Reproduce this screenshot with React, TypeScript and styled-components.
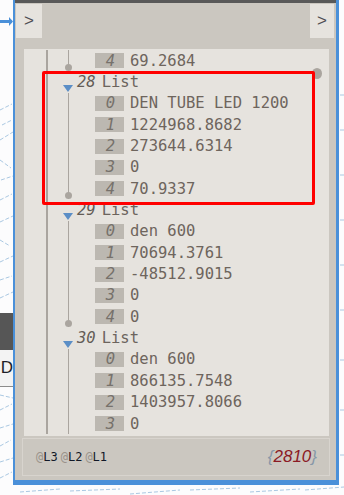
import React from "react";
import styled, { createGlobalStyle } from "styled-components";

const Global = createGlobalStyle`
  html, body { margin: 0; padding: 0; }
  body { width: 344px; height: 495px; overflow: hidden; background: #fcfcfd; }
`;

const MONO = `"DejaVu Sans Mono", "Liberation Mono", monospace`;

const Canvas = styled.div`
  position: relative;
  width: 344px;
  height: 495px;
  overflow: hidden;
  background: #fcfcfd;
`;

const Sketch = styled.svg`
  position: absolute;
  left: 0;
  top: 0;
  width: 344px;
  height: 495px;
`;

const SideNode = styled.div`
  position: absolute;
  left: 0;
  top: 313px;
  width: 13px;
  display: flex;
  flex-direction: column;
`;

const SideHead = styled.div`
  height: 37px;
  background: #565656;
`;

const SideBody = styled.div`
  height: 36px;
  background: #f3f3f3;
  border-bottom: 1px solid #8c8c8c;
  display: flex;
  align-items: center;
  justify-content: flex-end;
  font-family: "Liberation Sans", Arial, sans-serif;
  font-size: 17px;
  color: #1e1e28;
  overflow: hidden;
`;

const Node = styled.div`
  position: absolute;
  left: 13px;
  top: 0;
  width: 321px;
  border-left: 2px solid #4a90d9;
  border-right: 3px solid #4a90d9;
  border-bottom: 5px solid #4a90d9;
  background: #cbc7c0;
  display: flex;
  flex-direction: column;
`;

const TitleStrip = styled.div`
  height: 3px;
  background: #595959;
`;

const Header = styled.div`
  height: 46px;
  display: flex;
  justify-content: space-between;
  align-items: flex-start;
`;

const ExpandButton = styled.div<{ $side: "left" | "right" }>`
  margin-top: 1px;
  margin-left: ${(p) => (p.$side === "left" ? "1px" : "0")};
  margin-right: ${(p) => (p.$side === "right" ? "2px" : "0")};
  width: ${(p) => (p.$side === "left" ? "26px" : "24px")};
  height: 34px;
  background: #e6e3de;
  display: flex;
  align-items: center;
  justify-content: center;
  font-family: "Liberation Sans", Arial, sans-serif;
  font-size: 17px;
  color: #4e4e52;
  padding-bottom: 1px;
  box-sizing: border-box;
`;

const Panel = styled.div`
  position: relative;
  margin: 0 7px 0 9px;
  height: 387px;
  background: #e6e3de;
  padding: 1px 0 2px;
  box-sizing: border-box;
  display: flex;
  flex-direction: column;
`;

const Viewport = styled.div`
  flex: 1;
  overflow: hidden;
`;

const Trunk = styled.div`
  margin-left: 22px;
  border-left: 2px solid #aaa59f;
  min-height: 100%;
`;

const Group = styled.div``;

const HeaderRow = styled.div`
  height: 21.35px;
  display: flex;
  align-items: center;
  padding-left: 15px;
  font-family: ${MONO};
  font-size: 15.5px;
  white-space: nowrap;
`;

const Caret = styled.span`
  align-self: flex-end;
  margin-bottom: 1px;
  width: 0;
  height: 0;
  border-left: 5px solid transparent;
  border-right: 5px solid transparent;
  border-top: 7px solid #5b8ec6;
  margin-right: 4px;
`;

const ListIndex = styled.span`
  font-style: italic;
  color: #635c56;
  margin-right: 6px;
`;

const ListLabel = styled.span`
  color: #6c645d;
`;

const Children = styled.div<{ $open?: boolean }>`
  position: relative;
  margin-left: 20px;
  border-left: 1px solid #aaa59f;
  &::after {
    content: "";
    display: ${(p) => (p.$open ? "none" : "block")};
    position: absolute;
    left: -4px;
    bottom: 0;
    width: 7px;
    height: 7px;
    border-radius: 50%;
    background: #aaa59f;
  }
`;

const ItemRow = styled.div`
  height: 21.35px;
  display: flex;
  align-items: center;
  padding-left: 26px;
  font-family: ${MONO};
  font-size: 15.5px;
  white-space: nowrap;
`;

const IndexBox = styled.span`
  width: 29px;
  height: 15px;
  background: #bcb8b1;
  color: #76716b;
  font-style: italic;
  display: flex;
  align-items: center;
  justify-content: flex-end;
  padding-right: 9px;
  box-sizing: border-box;
  margin-right: 6px;
`;

const Value = styled.span`
  color: #6e655d;
`;

const ScrollDot = styled.div`
  position: absolute;
  right: 7px;
  top: 19px;
  width: 10px;
  height: 11px;
  border-radius: 50%;
  background: #aaa59f;
`;

const Footer = styled.div`
  margin: 2px 6px 4px 7px;
  height: 38px;
  border: 1px solid #d8d4ce;
  box-sizing: border-box;
  display: flex;
  align-items: center;
  justify-content: space-between;
  padding: 0 12px 0 13px;
`;

const Levels = styled.div`
  display: flex;
  gap: 3px;
  font-family: ${MONO};
  font-size: 12px;
`;

const Level = styled.span`
  color: #111827;
  & > b {
    font-weight: normal;
    color: #9a938b;
  }
`;

const Count = styled.div`
  font-family: "Liberation Sans", Arial, sans-serif;
  font-style: italic;
  font-size: 17px;
  color: #8b1a24;
  & > span {
    color: #8797a8;
  }
`;

const Highlight = styled.div`
  position: absolute;
  left: 42px;
  top: 71px;
  width: 273px;
  height: 134px;
  border: 3px solid #ff0000;
  border-radius: 2px;
  box-sizing: border-box;
`;

type ListData = { index?: number; open?: boolean; items: { i: number; v: string }[] };

const lists: ListData[] = [
  { items: [{ i: 4, v: "69.2684" }] },
  {
    index: 28,
    items: [
      { i: 0, v: "DEN TUBE LED 1200" },
      { i: 1, v: "1224968.8682" },
      { i: 2, v: "273644.6314" },
      { i: 3, v: "0" },
      { i: 4, v: "70.9337" },
    ],
  },
  {
    index: 29,
    items: [
      { i: 0, v: "den 600" },
      { i: 1, v: "70694.3761" },
      { i: 2, v: "-48512.9015" },
      { i: 3, v: "0" },
      { i: 4, v: "0" },
    ],
  },
  {
    index: 30,
    open: true,
    items: [
      { i: 0, v: "den 600" },
      { i: 1, v: "866135.7548" },
      { i: 2, v: "1403957.8066" },
      { i: 3, v: "0" },
    ],
  },
];

const sketchLines: [number, number, number, number][] = [
  [0, 110, 12, 104], [2, 125, 12, 120], [0, 140, 13, 132], [0, 160, 11, 168],
  [1, 180, 13, 176], [0, 200, 12, 194], [0, 222, 13, 216], [0, 240, 10, 246],
  [0, 262, 13, 256], [0, 280, 12, 276], [0, 298, 13, 292], [0, 395, 13, 398],
  [0, 410, 12, 404], [0, 428, 13, 424], [0, 446, 11, 440], [0, 462, 13, 458],
  [0, 478, 12, 472], [340, 95, 344, 95], [340, 130, 344, 130], [340, 175, 344, 175],
  [340, 220, 344, 220], [340, 265, 344, 265], [340, 310, 344, 310], [340, 360, 344, 360],
  [340, 410, 344, 410], [340, 455, 344, 455], [20, 492, 60, 489], [70, 491, 120, 489],
  [130, 494, 180, 490], [190, 490, 240, 488], [250, 492, 300, 489], [305, 490, 344, 487],
];

export default function App() {
  return (
    <>
      <Global />
      <Canvas>
        <Sketch viewBox="0 0 344 495">
          {sketchLines.map(([x1, y1, x2, y2], k) => (
            <line
              key={k}
              x1={x1}
              y1={y1}
              x2={x2}
              y2={y2}
              stroke="#aac8e2"
              strokeWidth={1}
              strokeDasharray="4 2"
            />
          ))}
          <line x1={0} y1={21.5} x2={12} y2={21.5} stroke="#4a90d9" strokeWidth={3} />
          <path d="M9 17 L13 21.5 L9 26 Z" fill="#4a90d9" />
        </Sketch>
        <SideNode>
          <SideHead />
          <SideBody>D</SideBody>
        </SideNode>
        <Node>
          <TitleStrip />
          <Header>
            <ExpandButton $side="left">&gt;</ExpandButton>
            <ExpandButton $side="right">&gt;</ExpandButton>
          </Header>
          <Panel>
            <Viewport>
              <Trunk>
                {lists.map((l, gi) => (
                  <Group key={gi}>
                    {l.index !== undefined && (
                      <HeaderRow>
                        <Caret />
                        <ListIndex>{l.index}</ListIndex>
                        <ListLabel>List</ListLabel>
                      </HeaderRow>
                    )}
                    <Children $open={l.open}>
                      {l.items.map((it) => (
                        <ItemRow key={it.i}>
                          <IndexBox>{it.i}</IndexBox>
                          <Value>{it.v}</Value>
                        </ItemRow>
                      ))}
                    </Children>
                  </Group>
                ))}
              </Trunk>
            </Viewport>
            <ScrollDot />
          </Panel>
          <Footer>
            <Levels>
              <Level><b>@</b>L3</Level>
              <Level><b>@</b>L2</Level>
              <Level><b>@</b>L1</Level>
            </Levels>
            <Count>
              <span>{"{"}</span>2810<span>{"}"}</span>
            </Count>
          </Footer>
        </Node>
        <Highlight />
      </Canvas>
    </>
  );
}
